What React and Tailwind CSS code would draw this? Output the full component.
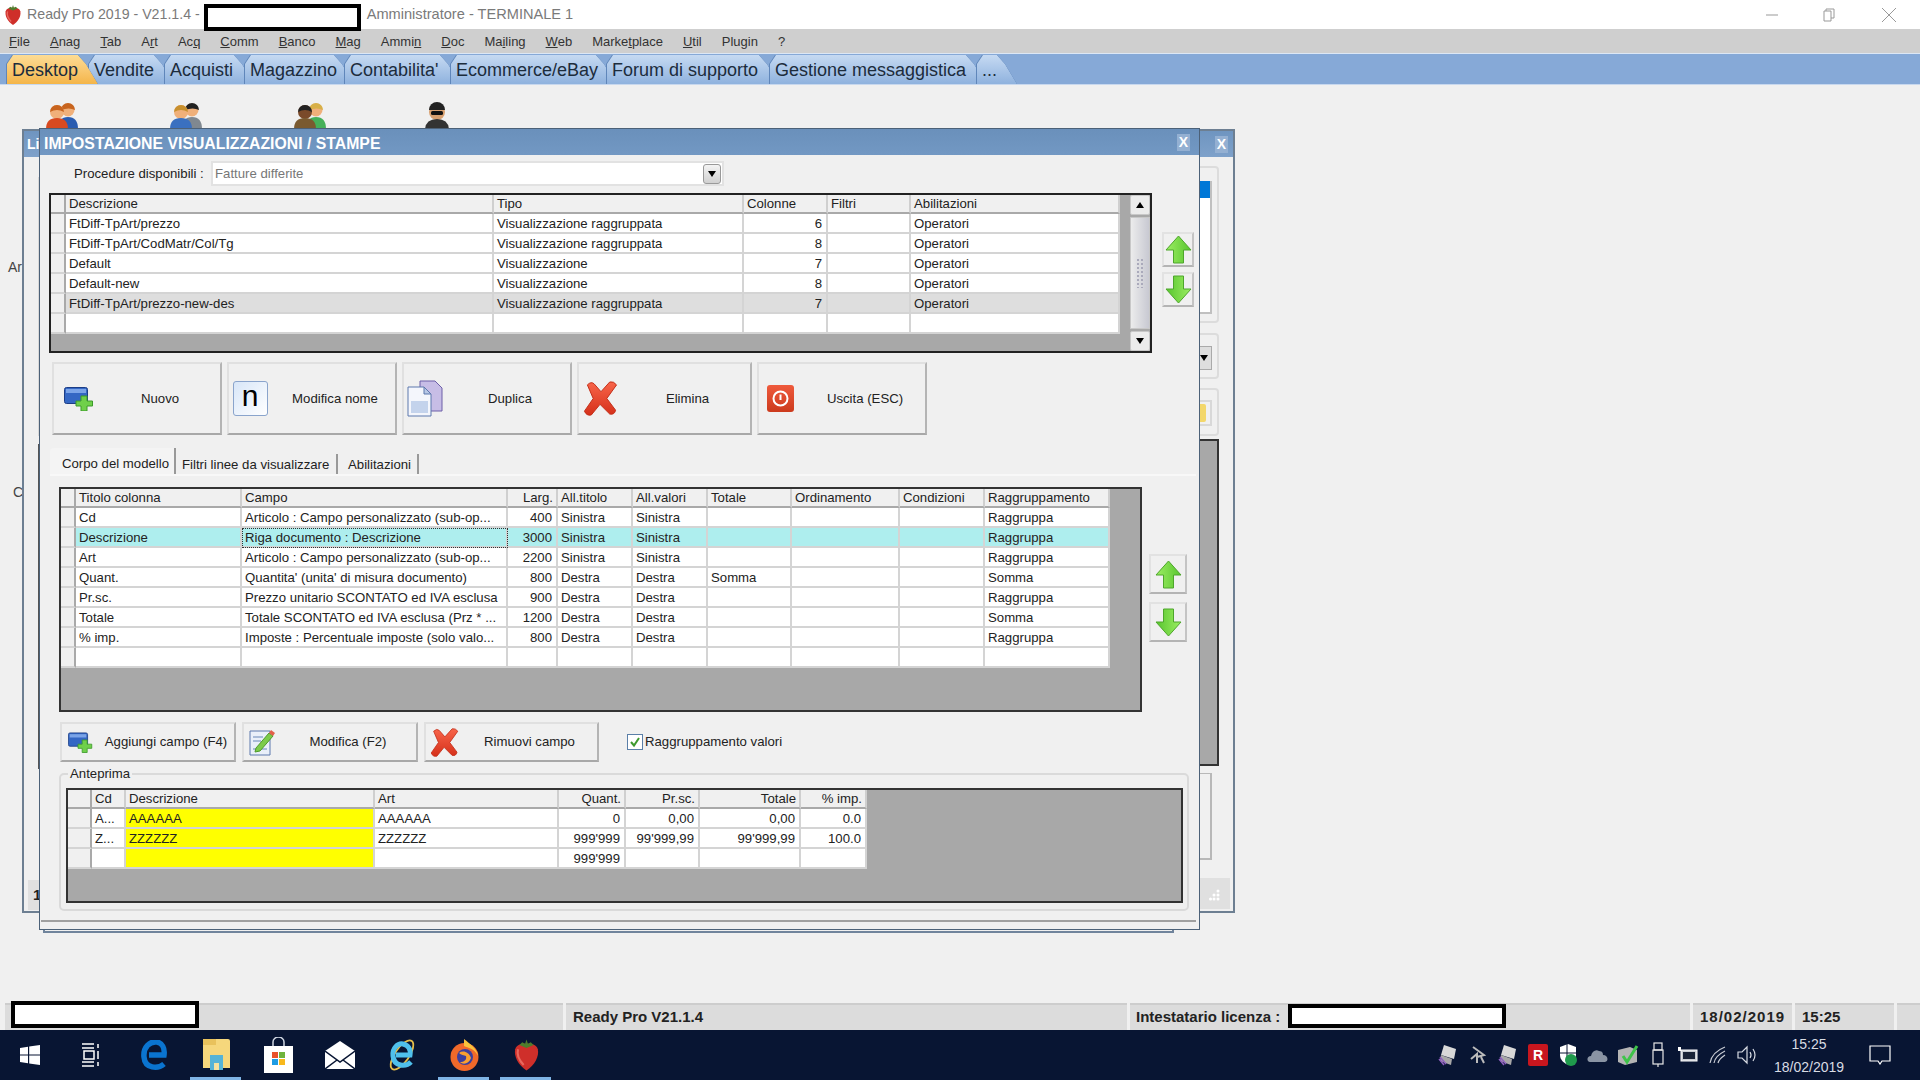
import React from "react";

const menus = [
  ["", "F", "ile"], ["", "A", "nag"], ["", "T", "ab"], ["A", "r", "t"], ["Ac", "q", ""], ["", "C", "omm"], ["", "B", "anco"], ["", "M", "ag"],
  ["Ammi", "n", ""], ["", "D", "oc"], ["Ma", "i", "ling"], ["", "W", "eb"], ["Marke", "t", "place"], ["", "U", "til"], ["Plugin", "", ""], ["?", "", ""],
];

const topTabs = [
  ["Desktop", "w-[92px]"], ["Vendite", "w-[86px]"], ["Acquisti", "w-[90px]"], ["Magazzino", "w-[110px]"], ["Contabilita'", "w-[116px]"],
  ["Ecommerce/eBay", "w-[166px]"], ["Forum di supporto", "w-[173px]"], ["Gestione messaggistica", "w-[217px]"], ["...", "w-[41px]"],
];

const tabClip = "[clip-path:polygon(0_100%,0_9px,6px_0,calc(100%_-_20px)_0,calc(100%_-_12px)_9px,100%_100%)]";

const cols1 = "grid grid-cols-[15px_428px_250px_84px_83px_209px]";
const cols2 = "grid grid-cols-[15px_166px_266px_50px_75px_75px_84px_108px_85px_125px]";
const cols3 = "grid grid-cols-[24px_34px_249px_184px_67px_74px_101px_66px]";

const rows1 = [
  ["FtDiff-TpArt/prezzo", "Visualizzazione raggruppata", "6", "", "Operatori"],
  ["FtDiff-TpArt/CodMatr/Col/Tg", "Visualizzazione raggruppata", "8", "", "Operatori"],
  ["Default", "Visualizzazione", "7", "", "Operatori"],
  ["Default-new", "Visualizzazione", "8", "", "Operatori"],
  ["FtDiff-TpArt/prezzo-new-des", "Visualizzazione raggruppata", "7", "", "Operatori"],
  ["", "", "", "", ""],
];

const rows2 = [
  ["Cd", "Articolo : Campo personalizzato (sub-op...", "400", "Sinistra", "Sinistra", "", "", "", "Raggruppa"],
  ["Descrizione", "Riga documento : Descrizione", "3000", "Sinistra", "Sinistra", "", "", "", "Raggruppa"],
  ["Art", "Articolo : Campo personalizzato (sub-op...", "2200", "Sinistra", "Sinistra", "", "", "", "Raggruppa"],
  ["Quant.", "Quantita' (unita' di misura documento)", "800", "Destra", "Destra", "Somma", "", "", "Somma"],
  ["Pr.sc.", "Prezzo unitario SCONTATO ed IVA esclusa", "900", "Destra", "Destra", "", "", "", "Raggruppa"],
  ["Totale", "Totale SCONTATO ed IVA esclusa (Prz * ...", "1200", "Destra", "Destra", "", "", "", "Somma"],
  ["% imp.", "Imposte : Percentuale imposte (solo valo...", "800", "Destra", "Destra", "", "", "", "Raggruppa"],
  ["", "", "", "", "", "", "", "", ""],
];

const rows3 = [
  ["A...", "AAAAAA", "AAAAAA", "0", "0,00", "0,00", "0.0"],
  ["Z...", "ZZZZZZ", "ZZZZZZ", "999'999", "99'999,99", "99'999,99", "100.0"],
  ["", "", "", "999'999", "", "", ""],
];

function Grid({ cols, head, rows, rightCols = [], rightHead = [], rowBg, cellBg, focus }) {
  return (
    <div className="flex-none">
      <div className={cols}>
        <div className="h-[19px] bg-[#f0f0f0] border-r-2 border-b-2 border-[#a9a9a9]"></div>
        {head.map((h, i) => (
          <div
            key={i}
            className={`h-[19px] bg-[#f0f0f0] border-r-2 border-b-2 border-r-[#cfcfcf] border-b-[#a9a9a9] px-[3px] pt-[1px] leading-[16px] whitespace-nowrap overflow-hidden ${rightHead.includes(i) ? "text-right" : ""}`}
          >
            {h}
          </div>
        ))}
      </div>
      {rows.map((r, ri) => (
        <div key={ri} className={cols}>
          <div className="h-[20px] bg-[#f0f0f0] border-r-2 border-b-2 border-r-[#a9a9a9] border-b-[#d4d4d4]"></div>
          {r.map((c, ci) => {
            const bg = (cellBg && cellBg(ri, ci)) || (rowBg && rowBg(ri)) || "bg-white";
            const isFocus = focus && focus[0] === ri && focus[1] === ci;
            return (
              <div
                key={ci}
                className={`h-[20px] ${bg} border-r-2 border-b-2 border-[#d4d4d4] px-[3px] pt-[2px] leading-[16px] whitespace-nowrap overflow-hidden ${rightCols.includes(ci) ? "text-right pr-[4px]" : ""} ${isFocus ? "outline-1 outline-dotted outline-[#333] -outline-offset-1" : ""}`}
              >
                {c}
              </div>
            );
          })}
        </div>
      ))}
    </div>
  );
}

function ArrowBtn({ up, big }) {
  return (
    <div className={`flex items-center justify-center bg-[#f0f0f0] border-2 border-t-[#e2e2e2] border-l-[#e2e2e2] border-r-[#c4c4c4] border-b-[#b4b4b4] ${big ? "w-[38px] h-[40px]" : "w-[32px] h-[35px]"}`}>
      <svg width="27" height="29" viewBox="0 0 27 29" className={up ? "" : "rotate-180"}>
        <defs>
          <linearGradient id="arrowGreen" x1="0" y1="0" x2="1" y2="0">
            <stop offset="0" stopColor="#9cee62" />
            <stop offset="1" stopColor="#58c52f" />
          </linearGradient>
        </defs>
        <path d="M13.5 1 L26 15 H18.5 V28 H8.5 V15 H1 Z" fill="url(#arrowGreen)" stroke="#4ea62c" strokeWidth="1" strokeLinejoin="round" />
      </svg>
    </div>
  );
}

function AddIcon({ small }) {
  return (
    <svg width={small ? 25 : 30} height={small ? 21 : 24} viewBox="0 0 30 24">
      <rect x="0.5" y="0.5" width="23" height="16" rx="2" fill="#3467c4" stroke="#1c3d86" />
      <rect x="2" y="2" width="20" height="4" fill="#7ba4e8" />
      <path d="M17 9 h6 v5 h5.5 v5 h-5.5 v5 h-6 v-5 h-5 v-5 h5 z" fill="#6fd04a" stroke="#3c9a2a" strokeWidth="1" />
    </svg>
  );
}

function RedX({ size = 35 }) {
  return (
    <svg width={size} height={size} viewBox="0 0 35 36">
      <defs>
        <linearGradient id="redGrad" x1="0" y1="0" x2="0" y2="1">
          <stop offset="0" stopColor="#f8654a" />
          <stop offset="1" stopColor="#d5301a" />
        </linearGradient>
      </defs>
      <path d="M4 4 Q8 0 11 3 L18 11 L27 1 Q31 0 34 4 L24 18 L33 30 Q32 35 27 34 L17 24 L8 35 Q3 36 1 31 L10 18 Z" fill="url(#redGrad)" stroke="#c22c16" strokeWidth="1" strokeLinejoin="round" />
    </svg>
  );
}

function DuplicaIcon() {
  return (
    <svg width="36" height="37" viewBox="0 0 36 37">
      <path d="M13 1 H28 L35 8 V31 H13 Z" fill="#c7bde6" stroke="#6d5fa8" />
      <path d="M1 7 H17 L24 14 V36 H1 Z" fill="#f4f6fc" stroke="#5d78ad" />
      <path d="M17 7 V14 H24 Z" fill="#b8c8e6" stroke="#5d78ad" />
      <rect x="4" y="21" width="17" height="12" fill="#c4d3ec" />
    </svg>
  );
}

function PowerIcon() {
  return (
    <div className="w-[27px] h-[27px] rounded-[3px] bg-gradient-to-b from-[#ef5a3c] to-[#cc3a1c] flex items-center justify-center">
      <svg width="17" height="17" viewBox="0 0 17 17" fill="none">
        <circle cx="8.5" cy="8.5" r="7" stroke="#fff" strokeWidth="2" />
        <path d="M8.5 4.5 V10" stroke="#fff" strokeWidth="2" />
      </svg>
    </div>
  );
}

function EditIcon() {
  return (
    <svg width="27" height="28" viewBox="0 0 27 28">
      <path d="M1 3 H21 V27 H1 Z" fill="#e9eff9" stroke="#5d78ad" />
      <path d="M4 9 H14 M4 13 H12 M4 21 H18" stroke="#a9bbd8" strokeWidth="2" />
      <path d="M7 20 L20 5 L24 8 L11 23 L6 24 Z" fill="#7ccb4a" stroke="#4e9a2a" />
      <path d="M20 5 L22 2 L26 5 L24 8 Z" fill="#e2604a" />
    </svg>
  );
}

function Btn({ w, h, iconW, icon, label, iconShift = "" }) {
  return (
    <div className={`flex items-center ${w} ${h} bg-[#f0f0f0] border-2 border-t-[#e0e0e0] border-l-[#e0e0e0] border-r-[#b4b4b4] border-b-[#a8a8a8]`}>
      <div className={`flex justify-center flex-none ${iconW} ${iconShift}`}>{icon}</div>
      <div className="flex-1 text-center whitespace-nowrap">{label}</div>
    </div>
  );
}

function Person({ a, b, hairA, hairB, skinA = "#f0b07a", skinB = "#f0b07a" }) {
  return (
    <svg width="38" height="27" viewBox="0 0 38 27">
      <circle cx="24" cy="8" r="6.5" fill={skinB} />
      <path d="M17 8 a7 7 0 0 1 14 0 q-6 -3 -14 0 z" fill={hairB} />
      <path d="M14 27 q0 -12 10 -12 q10 0 10 12 z" fill={b} />
      <circle cx="13" cy="10" r="7" fill={skinA} />
      <path d="M6 10 a7 7 0 0 1 14 0 q-7 -4 -14 0 z" fill={hairA} />
      <path d="M2 27 q0 -11 11 -11 q11 0 11 11 z" fill={a} />
    </svg>
  );
}

function Strawberry({ w = 18, h = 22 }) {
  return (
    <svg width={w} height={h} viewBox="0 0 18 24">
      <path d="M9 23 C3 19 0 13 1 8 C2 4 6 4 9 4 C12 4 16 4 17 8 C18 13 15 19 9 23 Z" fill="#cf2f2a" />
      <path d="M3 8 C2 12 4 16 7 19" stroke="#e8675e" strokeWidth="1.5" fill="none" />
      <path d="M4 5 L6 3 L8 4 L9 1 L10 4 L12 3 L14 5 L9 7 Z" fill="#4e7d2c" />
    </svg>
  );
}

function Scrollbar() {
  return (
    <div className="w-[20px] h-full flex flex-col bg-[#a8a8a8]">
      <div className="h-[20px] bg-[#ececec] border border-[#c8c8c8] rounded-[2px] flex items-center justify-center">
        <div className="w-0 h-0 border-x-[4px] border-x-transparent border-b-[6px] border-b-black"></div>
      </div>
      <div className="flex-1 my-[2px] bg-gradient-to-r from-[#ececec] to-[#c8c9d2] border border-[#c8c8c8] flex items-center justify-center">
        <div className="w-[8px] h-[30px] bg-[radial-gradient(#aab_1px,transparent_1px)] bg-[length:4px_4px]"></div>
      </div>
      <div className="h-[20px] bg-[#ececec] border border-[#c8c8c8] rounded-[2px] flex items-center justify-center">
        <div className="w-0 h-0 border-x-[4px] border-x-transparent border-t-[6px] border-t-black"></div>
      </div>
    </div>
  );
}

function CloseTile() {
  return <span className="w-[13px] h-[17px] bg-[#94b0d2] text-white font-bold text-[14px] leading-[17px] text-center">X</span>;
}

function BackWindow() {
  return (
    <div className="absolute left-[22px] top-[129px] w-[1213px] h-[784px] border-2 border-[#6d7f92] bg-[#f0f0f0] text-[13px]">
      <div className="h-[26px] bg-gradient-to-b from-[#6f95c0] to-[#7ea1ca] flex items-center justify-between pl-[3px] pr-[5px]">
        <span className="text-white text-[14px] font-bold">Li</span>
        <CloseTile />
      </div>
      <div className="flex justify-between h-[754px]">
        <div className="w-[17px] flex flex-col items-end">
          <div className="w-[3px] h-[259px] bg-[#d8d8d8] mt-[20px]"></div>
          <div className="w-[3px] h-[325px] bg-[#555] mt-[8px]"></div>
          <div className="w-[13px] h-[30px] mt-[111px] bg-[#e0e0e0] font-bold text-[#222] text-[15px] leading-[30px] pl-[5px] overflow-hidden">1</div>
        </div>
        <div className="w-[34px] flex flex-col">
          <div className="w-[20px] h-[157px] mt-[9px] border-2 border-l-0 border-[#dcdcdc] rounded-r-[4px]">
            <div className="w-[13px] h-[133px] mt-[13px] bg-white border-r-2 border-b-2 border-[#c0c0c0]">
              <div className="h-[17px] bg-[#0078d7]"></div>
            </div>
          </div>
          <div className="w-[20px] h-[46px] mt-[10px] border-2 border-l-0 border-[#dcdcdc] rounded-r-[4px]">
            <div className="w-[13px] h-[24px] mt-[11px] bg-[#dedede] border border-[#aaa] flex items-center">
              <div className="w-0 h-0 border-x-[4px] border-x-transparent border-t-[6px] border-t-black"></div>
            </div>
          </div>
          <div className="w-[20px] h-[48px] mt-[9px] border-2 border-l-0 border-[#dcdcdc] rounded-r-[4px]">
            <div className="w-[13px] h-[26px] mt-[10px] bg-[#f0f0f0] border-2 border-l-0 border-[#d8d8d8] flex items-center">
              <div className="w-[7px] h-[18px] bg-[#f3d76a] rounded-r-[2px]"></div>
            </div>
          </div>
          <div className="w-[20px] h-[327px] mt-[3px] bg-[#a8a8a8] border-2 border-l-0 border-[#333]"></div>
          <div className="w-[13px] h-[87px] mt-[7px] border-r-2 border-b-2 border-t border-[#b8b8b8]"></div>
          <div className="w-[31px] h-[31px] mt-[18px] bg-[#e0e0e0] flex items-end justify-end pr-[9px] pb-[8px]">
            <svg width="12" height="12" viewBox="0 0 12 12" fill="#fff"><circle cx="9" cy="2" r="1.5" /><circle cx="5" cy="6" r="1.5" /><circle cx="9" cy="6" r="1.5" /><circle cx="1.5" cy="10" r="1.5" /><circle cx="5" cy="10" r="1.5" /><circle cx="9" cy="10" r="1.5" /></svg>
          </div>
        </div>
      </div>
    </div>
  );
}

function FrontWindow() {
  return (
    <div className="absolute left-[39px] top-[128px] w-[1161px] h-[802px] border border-[#4c6178] bg-[#f0f0f0] text-[13.2px] text-[#222]">
      <div className="h-[26px] bg-gradient-to-b from-[#6a90bb] to-[#7298c3] flex items-center justify-between pl-[4px] pr-[9px]">
        <span className="text-white text-[15.8px] font-bold pt-[3px]">IMPOSTAZIONE VISUALIZZAZIONI / STAMPE</span>
        <CloseTile />
      </div>

      <div className="flex items-center h-[25px] mt-[6px] pl-[34px]">
        <div className="w-[137px] whitespace-nowrap">Procedure disponibili :</div>
        <div className="w-[513px] h-[25px] bg-white border-2 border-[#e2e2e2] flex items-center justify-between pl-[2px] pr-[1px] text-[#777]">
          <span>Fatture differite</span>
          <div className="w-[18px] h-[20px] rounded-[3px] bg-gradient-to-b from-[#f4f4f4] to-[#d0d0d0] border border-[#999] flex items-center justify-center">
            <div className="w-0 h-0 border-x-[4px] border-x-transparent border-t-[6px] border-t-black"></div>
          </div>
        </div>
      </div>

      <div className="flex mt-[7px] ml-[9px]">
        <div className="w-[1103px] h-[160px] border-2 border-[#222] bg-[#a8a8a8] flex justify-between overflow-hidden">
          <Grid
            cols={cols1}
            head={["Descrizione", "Tipo", "Colonne", "Filtri", "Abilitazioni"]}
            rows={rows1}
            rightCols={[2]}
            rowBg={(r) => (r === 4 ? "bg-[#dedede]" : "")}
          />
          <Scrollbar />
        </div>
        <div className="ml-[10px] mt-[39px] flex flex-col gap-[5px]">
          <ArrowBtn up />
          <ArrowBtn />
        </div>
      </div>

      <div className="flex gap-[5px] mt-[9px] ml-[12px]">
        <Btn w="w-[170px]" h="h-[73px]" iconW="w-[46px]" iconShift="pl-[4px]" icon={<AddIcon />} label="Nuovo" />
        <Btn
          w="w-[170px]"
          h="h-[73px]"
          iconW="w-[46px]"
          iconShift="pr-[4px]"
          icon={<div className="w-[35px] h-[35px] rounded-[3px] border border-[#8aa4cc] bg-gradient-to-br from-[#d8e6f8] to-white text-black text-[30px] leading-[28px] text-center">n</div>}
          label="Modifica nome"
        />
        <Btn w="w-[170px]" h="h-[73px]" iconW="w-[46px]" iconShift="pr-[4px]" icon={<DuplicaIcon />} label="Duplica" />
        <Btn w="w-[175px]" h="h-[73px]" iconW="w-[46px]" iconShift="pr-[4px]" icon={<RedX />} label="Elimina" />
        <Btn w="w-[170px]" h="h-[73px]" iconW="w-[46px]" iconShift="pr-[4px]" icon={<PowerIcon />} label="Uscita (ESC)" />
      </div>

      <div className="flex items-end h-[27px] mt-[14px] ml-[10px] mr-[3px] border-b-2 border-[#f8f8f8]">
        <div className="w-[126px] h-[26px] pl-[12px] bg-[#f4f4f4] rounded-tl-[4px] border-r-2 border-[#999] leading-[32px]">Corpo del modello</div>
        <div className="w-[162px] h-[20px] pl-[6px] border-r-2 border-[#999] leading-[22px] whitespace-nowrap">Filtri linee da visualizzare</div>
        <div className="w-[81px] h-[20px] pl-[10px] border-r-2 border-[#999] leading-[22px]">Abilitazioni</div>
      </div>

      <div className="flex mt-[11px] ml-[19px]">
        <div className="w-[1083px] h-[225px] border-2 border-[#333] bg-[#a8a8a8] overflow-hidden">
          <Grid
            cols={cols2}
            head={["Titolo colonna", "Campo", "Larg.", "All.titolo", "All.valori", "Totale", "Ordinamento", "Condizioni", "Raggruppamento"]}
            rows={rows2}
            rightCols={[2]}
            rightHead={[2]}
            rowBg={(r) => (r === 1 ? "bg-[#aeeeee]" : "")}
            focus={[1, 1]}
          />
        </div>
        <div className="ml-[7px] mt-[67px] flex flex-col gap-[8px]">
          <ArrowBtn up big />
          <ArrowBtn big />
        </div>
      </div>

      <div className="flex items-center h-[40px] mt-[10px] ml-[20px]">
        <Btn w="w-[176px]" h="h-[40px]" iconW="w-[36px]" icon={<AddIcon small />} label="Aggiungi campo (F4)" />
        <div className="w-[6px]"></div>
        <Btn w="w-[176px]" h="h-[40px]" iconW="w-[36px]" icon={<EditIcon />} label="Modifica (F2)" />
        <div className="w-[6px]"></div>
        <Btn w="w-[175px]" h="h-[40px]" iconW="w-[36px]" icon={<RedX size={29} />} label="Rimuovi campo" />
        <div className="w-[16px] h-[16px] ml-[28px] mr-[2px] border border-[#5a7fa8] bg-white flex items-center justify-center">
          <svg width="12" height="12" viewBox="0 0 12 12" fill="none"><path d="M2 6 L5 9.5 L10 2" stroke="#3f9a2e" strokeWidth="2" /></svg>
        </div>
        <span className="whitespace-nowrap">Raggruppamento valori</span>
      </div>

      <div className="relative w-[1130px] h-[138px] mt-[11px] ml-[19px] border-2 border-[#dadada] rounded-[5px]">
        <div className="absolute -top-[9px] left-[7px] px-[2px] bg-[#f0f0f0] leading-[15px]">Anteprima</div>
        <div className="w-[1117px] h-[115px] mt-[13px] ml-[5px] border-2 border-[#333] bg-[#a8a8a8] overflow-hidden">
          <Grid
            cols={cols3}
            head={["Cd", "Descrizione", "Art", "Quant.", "Pr.sc.", "Totale", "% imp."]}
            rows={rows3}
            rightCols={[3, 4, 5, 6]}
            rightHead={[3, 4, 5, 6]}
            cellBg={(r, c) => (c === 1 ? "bg-[#ffff00]" : "")}
          />
        </div>
      </div>

      <div className="h-[2px] mt-[9px] ml-[1px] mr-[3px] bg-[#a0a0a0]"></div>
    </div>
  );
}

function WinLogo() {
  return (
    <svg width="20" height="20" viewBox="0 0 20 20" fill="#fff">
      <path d="M0 3 L8 1.8 V9.5 H0 Z M9.2 1.6 L20 0 V9.5 H9.2 Z M0 10.5 H8 V18.2 L0 17 Z M9.2 10.5 H20 V20 L9.2 18.4 Z" />
    </svg>
  );
}

function TaskbarIcons() {
  const slots = [
    { icon: <WinLogo /> },
    {
      icon: (
        <svg width="20" height="24" viewBox="0 0 20 24" fill="none" stroke="#fff" strokeWidth="1.5" className="-ml-[3px]">
          <path d="M1 1 H13 M1 5 H13 M3 8 H13 V16 H3 Z M1 19 H13 M1 23 H13 M17 1 V5 M17 8 V16 M17 19 V23" />
        </svg>
      ),
    },
    {
      icon: (
        <svg width="26" height="30" viewBox="0 0 26 30" fill="none">
          <path d="M23 24 C17 29 4 29 3 17 C2 7 9 1 16 2 C21 3 24 8 23 15 H8" stroke="#0a74d0" strokeWidth="5.5" />
        </svg>
      ),
    },
    {
      active: true,
      icon: (
        <svg width="29" height="38" viewBox="0 0 29 38">
          <path d="M1 3 H26 Q28 3 28 5 V32 H1 Z" fill="#f6d77c" />
          <path d="M1 3 H14 V9 H1 Z" fill="#e9c25c" />
          <path d="M8 19 H21 V34 H8 Z" fill="#56b3d6" />
          <path d="M12 27 H17 V34 H12 Z" fill="#f6e2a0" />
        </svg>
      ),
    },
    {
      icon: (
        <svg width="29" height="36" viewBox="0 0 29 36">
          <path d="M9 9 V5 a5.5 5 0 0 1 11 0 V9" fill="none" stroke="#cfd6e2" strokeWidth="1.5" />
          <path d="M0 9 H29 V36 H0 Z" fill="#fff" />
          <rect x="8" y="15" width="6" height="6" fill="#e9522c" />
          <rect x="15" y="15" width="6" height="6" fill="#6fb33c" />
          <rect x="8" y="22" width="6" height="6" fill="#1e9ce4" />
          <rect x="15" y="22" width="6" height="6" fill="#f8b81c" />
        </svg>
      ),
    },
    {
      icon: (
        <svg width="30" height="28" viewBox="0 0 30 28">
          <path d="M0 10 L15 0 L30 10 V28 H0 Z" fill="#fff" />
          <path d="M0 10 L15 21 L30 10 M0 28 L12 19 M30 28 L18 19" stroke="#081533" strokeWidth="1.5" fill="none" />
        </svg>
      ),
    },
    {
      icon: (
        <svg width="30" height="34" viewBox="0 0 30 34" fill="none">
          <ellipse cx="15" cy="17" rx="17" ry="7" transform="rotate(-55 15 17)" stroke="#e8c04a" strokeWidth="1.8" />
          <path d="M24 24 C19 29 7 29 6 18 C5 10 11 5 16 6 C21 7 24 11 23 17 H9" stroke="#4fc0ec" strokeWidth="5" />
        </svg>
      ),
    },
    {
      active: true,
      icon: (
        <svg width="29" height="34" viewBox="0 0 29 34">
          <circle cx="14.5" cy="19" r="14" fill="#f0692a" />
          <path d="M14 1 C20 6 27 10 28 18 C24 10 18 10 14 8 Z" fill="#f9c33c" />
          <circle cx="15" cy="19" r="8" fill="#3b3f9e" />
          <path d="M9 15 C13 12 19 14 21 20 C19 26 13 27 10 24 C14 24 17 22 16 18 C14 17 11 17 9 15 Z" fill="#f9a030" />
        </svg>
      ),
    },
    { active: true, icon: <Strawberry w={27} h={34} /> },
  ];
  return (
    <div className="flex -ml-[1px]">
      {slots.map((s, i) => (
        <div key={i} className="relative w-[62px] h-[50px] flex items-center justify-center -mt-[1px]">
          {s.icon}
          {s.active && <div className="absolute bottom-0 left-[5px] right-[6px] h-[3px] bg-[#7fb4e6]"></div>}
        </div>
      ))}
    </div>
  );
}

function TrayIcons() {
  const printer = (
    <svg width="20" height="22" viewBox="0 0 20 22">
      <path d="M6 1 L18 5 L16 15 L3 11 Z" fill="#d8d8d8" />
      <path d="M3 11 L14 15 L13 21 L2 17 Z" fill="#a8a8a8" />
      <path d="M1 15 L6 21 M2 13 L8 20" stroke="#8f5fc0" strokeWidth="1.5" />
    </svg>
  );
  const items = [
    printer,
    <svg width="18" height="20" viewBox="0 0 18 20" fill="none"><path d="M4 2 L15 10 L8 12 M2 14 L8 9 L8 18 M12 12 L15 18" stroke="#bbb" strokeWidth="2" /></svg>,
    printer,
    <div className="w-[20px] h-[22px] bg-[#c8161e] rounded-[2px] text-white text-[14px] font-bold leading-[22px] text-center">R</div>,
    <svg width="20" height="24" viewBox="0 0 20 24"><path d="M10 1 L18 4 V12 C18 17 14 20 10 22 C6 20 2 17 2 12 V4 Z" fill="#fff" /><path d="M9 1 V22 M2 10 H18" stroke="#081533" strokeWidth="1" /><circle cx="13" cy="17" r="6" fill="#1f9a4c" /></svg>,
    <svg width="22" height="14" viewBox="0 0 22 14"><path d="M3 14 C-1 13 0 8 4 8 C5 3 9 1 12 3 C16 3 16 6 16 7 C21 7 22 13 18 14 Z" fill="#8a94a4" /></svg>,
    <svg width="22" height="22" viewBox="0 0 22 22"><path d="M1 6 L13 3 L20 6 V18 L8 21 L1 18 Z" fill="#b4b4b4" /><path d="M6 12 L10 18 L20 2" stroke="#3fc44a" strokeWidth="3" fill="none" /></svg>,
    <svg width="12" height="26" viewBox="0 0 12 26" fill="none" stroke="#e8e8e8" strokeWidth="1.2"><rect x="2" y="1" width="8" height="7" /><rect x="1" y="8" width="10" height="14" /><path d="M6 22 V25" /></svg>,
    <svg width="20" height="16" viewBox="0 0 20 16"><rect x="3" y="3" width="16" height="11" fill="#c8ccd2" stroke="#fff" /><rect x="0" y="0" width="3" height="4" fill="#fff" /><rect x="5" y="5" width="12" height="7" fill="#1a2438" /></svg>,
    <svg width="18" height="18" viewBox="0 0 18 18" fill="none" stroke="#c8ccd4" strokeWidth="1.2"><path d="M1 17 Q3 6 16 1 M5 17 Q6 10 16 5 M9 17 Q10 13 16 9" /></svg>,
    <svg width="22" height="20" viewBox="0 0 22 20" fill="none" stroke="#d8dce4" strokeWidth="1.2"><path d="M1 7 H5 L10 2 V18 L5 13 H1 Z M13 7 Q15 10 13 13 M16 4 Q20 10 16 16" /></svg>,
  ];
  return (
    <div className="flex items-center">
      {items.map((it, i) => (
        <div key={i} className="w-[30px] flex justify-center">{it}</div>
      ))}
    </div>
  );
}

export default function App() {
  return (
    <div className="relative w-[1920px] h-[1080px] overflow-hidden bg-[#f0f0f0] font-['Liberation_Sans',Arial,sans-serif]">
      {/* title bar */}
      <div className="flex items-center h-[29px] bg-white pl-[4px] pr-[24px] text-[14.6px] text-[#7a7a7a] relative z-10">
        <Strawberry />
        <span className="ml-[5px] whitespace-nowrap text-[14.2px]">Ready Pro 2019 - V21.1.4 -</span>
        <div className="w-[157px] h-[27px] ml-[4px] mr-[6px] mt-[6px] border-[4px] border-black bg-white"></div>
        <span className="whitespace-nowrap">Amministratore - TERMINALE 1</span>
        <div className="flex-1"></div>
        <svg width="12" height="2" viewBox="0 0 12 2"><path d="M0 1 H12" stroke="#999" /></svg>
        <svg width="12" height="14" viewBox="0 0 12 14" fill="none" stroke="#999" className="ml-[45px]"><path d="M1 3 H8 V13 H1 Z M3 3 V1 H11 V10 H8" /></svg>
        <svg width="14" height="14" viewBox="0 0 14 14" stroke="#999" className="ml-[47px]"><path d="M0 0 L14 14 M14 0 L0 14" /></svg>
      </div>

      {/* menu */}
      <div className="flex items-center gap-[20px] h-[24px] pl-[9px] pt-[2px] bg-[#cfcfcf] text-[13px] text-[#333]">
        {menus.map((m, i) => (
          <span key={i}>
            {m[0]}
            <span className="underline">{m[1]}</span>
            {m[2]}
          </span>
        ))}
      </div>

      {/* tab strip */}
      <div className="flex items-end h-[32px] pl-[6px] bg-[#86a9d7] border-t border-[#dce7f5] border-b border-b-[#c8d8ee] text-[18px] text-[#1c2c3c]">
        {topTabs.map(([t, w], i) => (
          <div key={t} className={`${w} h-[29px] -mr-[10px] bg-[#5f86ba] ${tabClip} ${i === 0 ? "relative z-10" : ""}`}>
            <div className={`h-[29px] ml-[1px] pl-[5px] leading-[30px] whitespace-nowrap ${tabClip} ${i === 0 ? "bg-gradient-to-b from-[#fddc94] to-[#f4b548]" : "bg-gradient-to-b from-[#c6daf2] to-[#8fb2de]"}`}>
              {t}
            </div>
          </div>
        ))}
      </div>

      {/* desktop icons */}
      <div className="flex mt-[17px] ml-[44px] h-[27px]">
        <Person a="#d84a20" b="#2a5cb0" hairA="#c8641e" hairB="#c8641e" />
        <div className="w-[86px]"></div>
        <Person a="#3a70c0" b="#808890" hairA="#c8902e" hairB="#222" />
        <div className="w-[86px]"></div>
        <Person a="#7a5a30" b="#46b05a" hairA="#222" hairB="#d8b048" skinA="#7a4a2a" />
        <div className="w-[94px]"></div>
        <svg width="26" height="27" viewBox="0 0 26 27">
          <circle cx="13" cy="10" r="8" fill="#d8a070" />
          <path d="M5 8 a8 8 0 0 1 16 0 z" fill="#222" />
          <rect x="7" y="9" width="12" height="4" rx="1.5" fill="#111" />
          <path d="M1 27 q1 -10 12 -10 q11 0 12 10 z" fill="#333" />
        </svg>
      </div>

      <span className="absolute left-[8px] top-[257px] text-[14px] text-[#444]">Ar</span>
      <span className="absolute left-[13px] top-[482px] text-[14px] text-[#444]">C</span>

      <BackWindow />
      <div className="absolute left-[43px] top-[929px] w-[1131px] h-[4px] border-b-2 border-x-2 border-[#70849c] bg-[#f0f0f0]"></div>
      <FrontWindow />

      {/* status bar */}
      <div className="absolute left-0 right-0 bottom-[50px] flex h-[27px] pl-[5px] gap-[3px] text-[15px] font-bold text-[#222] leading-[24px]">
        <div className="relative w-[558px] bg-[#dcdcdc] border-t-2 border-[#cdcdcd]">
          <div className="absolute left-[6px] -top-[4px] w-[188px] h-[27px] border-[4px] border-black bg-white"></div>
        </div>
        <div className="w-[561px] bg-[#dcdcdc] border-t-2 border-[#cdcdcd] pl-[7px]">Ready Pro V21.1.4</div>
        <div className="relative w-[560px] bg-[#dcdcdc] border-t-2 border-[#cdcdcd] pl-[6px]">
          Intestatario licenza :
          <div className="absolute left-[158px] top-[-1px] w-[218px] h-[24px] border-[4px] border-black bg-white"></div>
        </div>
        <div className="w-[99px] bg-[#dcdcdc] border-t-2 border-[#cdcdcd] pl-[7px] tracking-[1px]">18/02/2019</div>
        <div className="w-[99px] bg-[#dcdcdc] border-t-2 border-[#cdcdcd] pl-[7px]">15:25</div>
        <div className="flex-1 bg-[#dcdcdc] border-t-2 border-[#cdcdcd]"></div>
      </div>

      {/* taskbar */}
      <div className="absolute left-0 right-0 bottom-0 h-[50px] bg-[#081533] flex items-center justify-between">
        <TaskbarIcons />
        <div className="flex items-center pr-[29px]">
          <TrayIcons />
          <div className="w-[92px] text-center text-[14px] leading-[23px] pt-[2px] text-[#d8dce4]">
            <div>15:25</div>
            <div>18/02/2019</div>
          </div>
          <div className="w-[36px] flex justify-end">
            <svg width="22" height="20" viewBox="0 0 22 20" fill="none" stroke="#fff" strokeWidth="1.2"><path d="M1 1 H21 V16 H13 L11 19 L9 16 H1 Z" /></svg>
          </div>
        </div>
      </div>
    </div>
  );
}
